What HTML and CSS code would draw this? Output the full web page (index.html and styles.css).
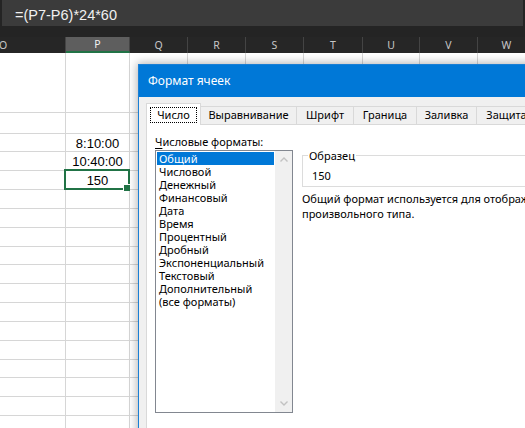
FILE: index.html
```html
<!DOCTYPE html>
<html lang="ru">
<head>
<meta charset="utf-8">
<title>Формат ячеек</title>
<link rel="stylesheet" href="styles.css">
</head>
<body>
<div class="app">
  <div class="formula-bar">
    <div class="formula-input">=(P7-P6)*24*60</div>
  </div>
  <div class="col-headers">
    <div class="ch ch-o">O</div>
    <div class="ch ch-p">P</div>
    <div class="ch w58">Q</div>
    <div class="ch w58">R</div>
    <div class="ch w58">S</div>
    <div class="ch w59">T</div>
    <div class="ch w57">U</div>
    <div class="ch w58">V</div>
    <div class="ch w58">W</div>
  </div>
  <div class="sheet-wrap">
    <div class="sheet">
      <div></div><div></div><div></div><div></div><div></div><div></div><div></div><div></div><div></div>
      <div></div><div></div><div></div><div></div><div></div><div></div><div></div><div></div><div></div>
      <div></div><div>8:10:00</div><div></div><div></div><div></div><div></div><div></div><div></div><div></div>
      <div></div><div>10:40:00</div><div></div><div></div><div></div><div></div><div></div><div></div><div></div>
      <div></div><div class="sel">150</div><div></div><div></div><div></div><div></div><div></div><div></div><div></div>
      <div></div><div></div><div></div><div></div><div></div><div></div><div></div><div></div><div></div>
      <div></div><div></div><div></div><div></div><div></div><div></div><div></div><div></div><div></div>
      <div></div><div></div><div></div><div></div><div></div><div></div><div></div><div></div><div></div>
      <div></div><div></div><div></div><div></div><div></div><div></div><div></div><div></div><div></div>
      <div></div><div></div><div></div><div></div><div></div><div></div><div></div><div></div><div></div>
      <div></div><div></div><div></div><div></div><div></div><div></div><div></div><div></div><div></div>
      <div></div><div></div><div></div><div></div><div></div><div></div><div></div><div></div><div></div>
      <div></div><div></div><div></div><div></div><div></div><div></div><div></div><div></div><div></div>
      <div></div><div></div><div></div><div></div><div></div><div></div><div></div><div></div><div></div>
      <div></div><div></div><div></div><div></div><div></div><div></div><div></div><div></div><div></div>
      <div></div><div></div><div></div><div></div><div></div><div></div><div></div><div></div><div></div>
      <div></div><div></div><div></div><div></div><div></div><div></div><div></div><div></div><div></div>
      <div></div><div></div><div></div><div></div><div></div><div></div><div></div><div></div><div></div>
    </div>

    <div class="dialog">
      <div class="dlg-title">Формат ячеек</div>
      <div class="dlg-body">
        <div class="tabs">
          <div class="tab active"><span class="focus">Число</span></div>
          <div class="tab t-align">Выравнивание</div>
          <div class="tab t-font">Шрифт</div>
          <div class="tab t-border">Граница</div>
          <div class="tab t-fill">Заливка</div>
          <div class="tab t-prot">Защита</div>
        </div>
        <div class="panel">
          <div class="left-col">
            <div class="label"><u>Ч</u>исловые форматы:</div>
            <div class="listbox">
              <div class="items">
                <div class="item selected">Общий</div>
                <div class="item">Числовой</div>
                <div class="item">Денежный</div>
                <div class="item">Финансовый</div>
                <div class="item">Дата</div>
                <div class="item">Время</div>
                <div class="item">Процентный</div>
                <div class="item">Дробный</div>
                <div class="item">Экспоненциальный</div>
                <div class="item">Текстовый</div>
                <div class="item">Дополнительный</div>
                <div class="item">(все форматы)</div>
              </div>
              <div class="scrollbar">
                <div class="sb-btn">
                  <svg width="8" height="5" viewBox="0 0 8 5"><polyline points="0.5,4.5 4,1 7.5,4.5" fill="none" stroke="#c2c2c2" stroke-width="1.4"/></svg>
                </div>
                <div class="sb-btn">
                  <svg width="8" height="5" viewBox="0 0 8 5"><polyline points="0.5,0.5 4,4 7.5,0.5" fill="none" stroke="#c2c2c2" stroke-width="1.4"/></svg>
                </div>
              </div>
            </div>
          </div>
          <div class="right-col">
            <fieldset class="sample">
              <legend>Образец</legend>
              <div class="sample-value">150</div>
            </fieldset>
            <p class="desc">Общий формат используется для отображения как текстовых, так и числовых значений<br>произвольного типа.</p>
          </div>
        </div>
      </div>
    </div>
  </div>
</div>
</body>
</html>
```

FILE: styles.css
```css
* {
  box-sizing: border-box;
}

html,
body {
  margin: 0;
  padding: 0;
}

body {
  width: 525px;
  height: 428px;
  overflow: hidden;
  background: #ffffff;
  font-family: "Noto Sans", "DejaVu Sans", sans-serif;
}

.app {
  width: 525px;
  height: 428px;
  overflow: hidden;
  display: flex;
  flex-direction: column;
}

/* formula bar */
.formula-bar {
  flex: none;
  height: 37px;
  background: #242424;
  padding: 0 2px;
}

.formula-input {
  height: 26px;
  background: #3b3b3b;
  color: #f0f0f0;
  font-family: "Liberation Sans", Arial, sans-serif;
  font-size: 14.5px;
  line-height: 26px;
  padding: 2px 0 0 13px;
  overflow: hidden;
  white-space: nowrap;
}

/* column headers */
.col-headers {
  flex: none;
  height: 16px;
  display: flex;
  background: #262626;
  color: #c6c6c6;
  font-size: 10.5px;
  line-height: 16px;
  white-space: nowrap;
}

.ch {
  flex: none;
  text-align: center;
  border-right: 1px solid #444444;
}

.ch-o {
  width: 66px;
  text-align: left;
  text-indent: -1px;
}

.ch-p {
  width: 64px;
  background: #5e5e5e;
  color: #f2f2f2;
  border-bottom: 2px solid #217346;
  line-height: 15px;
}

.w57 { width: 57px; }
.w58 { width: 58px; }
.w59 { width: 59px; }

/* sheet grid */
.sheet-wrap {
  position: relative;
  flex: 1;
  overflow: hidden;
}

.sheet {
  display: grid;
  grid-template-columns: 66px 64px 58px 58px 58px 59px 57px 58px 58px;
  grid-template-rows: 60px 20.5px repeat(16, 18.85px);
}

.sheet > div {
  border-right: 1px solid #d6d6d6;
  border-bottom: 1px solid #d6d6d6;
  font-family: "Liberation Sans", Arial, sans-serif;
  font-size: 13px;
  line-height: 17px;
  padding-top: 1px;
  text-align: center;
  color: #000000;
  white-space: nowrap;
}

.sheet > .sel {
  position: relative;
}

.sel::before {
  content: "";
  position: absolute;
  left: -2px;
  top: -2px;
  right: -1px;
  bottom: -1px;
  border: 2px solid #217346;
}

.sel::after {
  content: "";
  position: absolute;
  right: -1px;
  bottom: -2px;
  width: 6px;
  height: 6px;
  background: #217346;
  border-left: 1px solid #ffffff;
  border-top: 1px solid #ffffff;
}

/* dialog */
.dialog {
  position: absolute;
  left: 138px;
  top: 11px;
  width: 420px;
  height: 400px;
  border: 1px solid #1a7fd5;
  background: #f0f0f0;
  box-shadow: 0 0 9px 1px rgba(0, 0, 0, 0.3);
  display: flex;
  flex-direction: column;
}

.dlg-title {
  flex: none;
  height: 32px;
  background: #0078d7;
  color: #ffffff;
  font-size: 12px;
  line-height: 32px;
  padding-left: 9px;
  white-space: nowrap;
}

.dlg-body {
  flex: 1;
  padding: 6px 0 0 7px;
  font-size: 11px;
  color: #000000;
}

.tabs {
  display: flex;
  align-items: flex-end;
  height: 21px;
  position: relative;
  z-index: 1;
  white-space: nowrap;
}

.tab {
  flex: none;
  height: 18px;
  border-top: 1px solid #d9d9d9;
  border-right: 1px solid #d9d9d9;
  background: #f0f0f0;
  text-align: center;
  line-height: 16px;
  font-size: 11px;
}

.tab.active {
  width: 55px;
  height: 22px;
  margin-bottom: -1px;
  background: #ffffff;
  border-left: 1px solid #d9d9d9;
  padding-top: 3px;
}

.focus {
  display: inline-block;
  width: 47px;
  height: 16px;
  border: 1px dotted #000000;
  line-height: 14px;
}

.t-align { width: 96px; }
.t-font { width: 57px; }
.t-border { width: 63px; }
.t-fill { width: 60px; }
.t-prot { width: 60px; }

.panel {
  height: 320px;
  background: #ffffff;
  border: 1px solid #d9d9d9;
  padding: 9px 0 0 8px;
  display: flex;
  align-items: flex-start;
}

.left-col {
  flex: none;
  display: flex;
  flex-direction: column;
}

.label {
  line-height: 15px;
  white-space: nowrap;
}

.label u {
  text-underline-offset: 2px;
}

.listbox {
  margin-top: 1px;
  width: 138px;
  height: 263px;
  border: 1px solid #828790;
  background: #ffffff;
  display: flex;
}

.items {
  width: 119px;
  padding-top: 1px;
}

.item {
  height: 13px;
  line-height: 13px;
  margin: 0 1px;
  padding-left: 2px;
  white-space: nowrap;
}

.item.selected {
  background: #0078d7;
  color: #ffffff;
}

.scrollbar {
  flex: 1;
  background: #f0f0f0;
  display: flex;
  flex-direction: column;
  justify-content: space-between;
}

.sb-btn {
  height: 17px;
  display: flex;
  align-items: center;
  justify-content: center;
}

.sb-btn svg {
  display: block;
}

.right-col {
  flex: none;
  margin-left: 9px;
  padding-top: 14px;
  width: 240px;
}

.sample {
  margin: 0;
  width: 240px;
  border: 1px solid #dcdcdc;
  padding: 5px 0 3px 9px;
}

.sample legend {
  padding: 0 1px;
  margin-left: -4px;
  line-height: 15px;
}

.sample-value {
  line-height: 15px;
}

.desc {
  margin: 4px 0 0;
  line-height: 15px;
  white-space: nowrap;
}
```
